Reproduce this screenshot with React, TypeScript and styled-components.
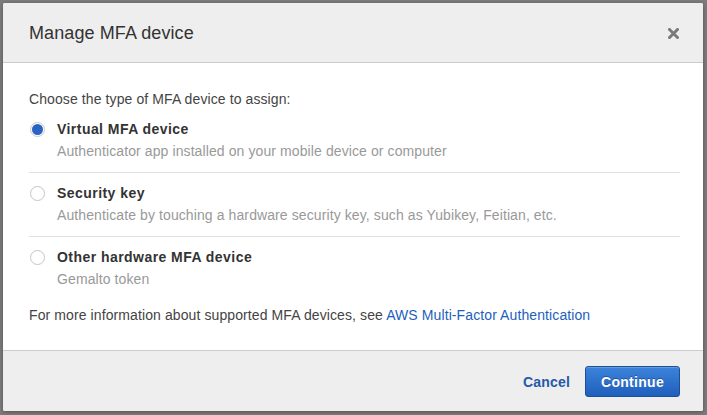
import React from "react";
import styled, { createGlobalStyle } from "styled-components";

const Global = createGlobalStyle`
  html, body { margin: 0; padding: 0; }
  body { font-family: "Liberation Sans", Arial, sans-serif; background: #7c7c7c; }
  * { box-sizing: border-box; }
`;

const Backdrop = styled.div`
  height: 415px;
  padding: 3px 4px 4px 3px;
  background: #7c7c7c;
  display: flex;
`;

const Dialog = styled.div`
  flex: 1;
  display: flex;
  flex-direction: column;
  background: #fff;
  border-radius: 2px;
  box-shadow: 0 1px 4px rgba(0, 0, 0, 0.35);
  overflow: hidden;
`;

const Header = styled.div`
  height: 61px;
  background: #eeeeee;
  border-bottom: 1px solid #cccccc;
  display: flex;
  align-items: center;
  justify-content: space-between;
  padding: 0 23px 0 26px;
`;

const Title = styled.h2`
  margin: 0;
  font-size: 18px;
  font-weight: normal;
  color: #333;
  line-height: 22px;
  padding-top: 1px;
  letter-spacing: 0.1px;
`;

const Close = styled.button`
  border: 0;
  background: transparent;
  padding: 0;
  width: 12px;
  height: 12px;
  display: flex;
  align-items: center;
  justify-content: center;
  margin-right: 1px;
  margin-top: 2px;
  cursor: pointer;
`;

const Body = styled.div`
  flex: 1;
  padding: 26px 23px 25px 26px;
  color: #444;
  font-size: 14px;
  line-height: 20px;
  letter-spacing: 0.1px;
`;

const Prompt = styled.p`
  margin: 0;
  color: #444;
`;

const Option = styled.label<{ $last?: boolean }>`
  display: grid;
  grid-template-columns: 28px 1fr;
  padding: 10px 0 ${(p) => (p.$last ? "10px" : "11px")} 0;
  border-bottom: ${(p) => (p.$last ? "none" : "1px solid #e2e2e2")};
  cursor: pointer;
`;

const Radio = styled.span<{ $checked?: boolean }>`
  width: 15px;
  height: 15px;
  margin-top: 3px;
  margin-left: 1px;
  border-radius: 50%;
  border: 1px solid ${(p) => (p.$checked ? "#c9c9c9" : "#c4c4c4")};
  background: #fff;
  display: flex;
  align-items: center;
  justify-content: center;
  &::after {
    content: "";
    width: 11px;
    height: 11px;
    border-radius: 50%;
    background: ${(p) => (p.$checked ? "#2b63c2" : "transparent")};
  }
`;

const OptionText = styled.div`
  display: flex;
  flex-direction: column;
  gap: 2px;
`;

const OptionLabel = styled.span`
  font-weight: bold;
  color: #333;
  letter-spacing: 0.45px;
`;

const OptionDesc = styled.span`
  color: #999;
`;

const Info = styled.p`
  margin: 6px 0 0 0;
  color: #444;
`;

const Link = styled.a`
  color: #1d5fbd;
  text-decoration: none;
`;

const Footer = styled.div`
  height: 63px;
  background: #eeeeee;
  border-top: 1px solid #cccccc;
  display: flex;
  align-items: center;
  justify-content: flex-end;
  gap: 15px;
  padding: 2px 23px 0 0;
`;

const CancelLink = styled.a`
  color: #2459a8;
  font-weight: bold;
  font-size: 14px;
  text-decoration: none;
  letter-spacing: 0.2px;
`;

const Primary = styled.button`
  height: 31px;
  padding: 0 14px;
  border-radius: 3px;
  border: 1px solid #1b4f98;
  background: linear-gradient(#3c83da, #1f5fbd);
  color: #fff;
  font-family: "Liberation Sans", Arial, sans-serif;
  font-weight: bold;
  font-size: 14px;
  letter-spacing: 0.3px;
  text-shadow: 0 -1px 0 rgba(0, 0, 0, 0.3);
  box-shadow: inset 0 1px 0 rgba(255, 255, 255, 0.2);
  cursor: pointer;
  width: 95px;
`;

const options = [
  { label: "Virtual MFA device", desc: "Authenticator app installed on your mobile device or computer", checked: true },
  { label: "Security key", desc: "Authenticate by touching a hardware security key, such as Yubikey, Feitian, etc.", checked: false },
  { label: "Other hardware MFA device", desc: "Gemalto token", checked: false },
];

export default function App() {
  return (
    <>
      <Global />
      <Backdrop>
        <Dialog>
          <Header>
            <Title>Manage MFA device</Title>
            <Close aria-label="Close">
              <svg width="11" height="11" viewBox="0 0 11 11">
                <path d="M1.5 1.5 L9.5 9.5 M9.5 1.5 L1.5 9.5" stroke="#7a7a7a" strokeWidth="3" strokeLinecap="square" />
              </svg>
            </Close>
          </Header>
          <Body>
            <Prompt>Choose the type of MFA device to assign:</Prompt>
            {options.map((o, i) => (
              <Option key={o.label} $last={i === options.length - 1}>
                <Radio $checked={o.checked} />
                <OptionText>
                  <OptionLabel>{o.label}</OptionLabel>
                  <OptionDesc>{o.desc}</OptionDesc>
                </OptionText>
              </Option>
            ))}
            <Info>
              For more information about supported MFA devices, see <Link href="#">AWS Multi-Factor Authentication</Link>
            </Info>
          </Body>
          <Footer>
            <CancelLink href="#">Cancel</CancelLink>
            <Primary>Continue</Primary>
          </Footer>
        </Dialog>
      </Backdrop>
    </>
  );
}
